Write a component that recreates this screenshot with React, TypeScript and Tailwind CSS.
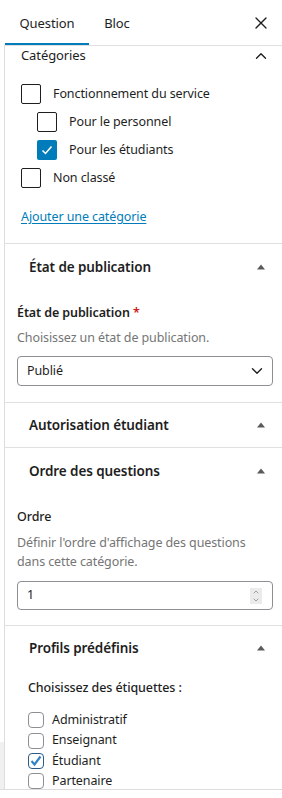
import { ChevronDown, ChevronUp, X } from 'lucide-react';

interface CategoryItem {
  label: string;
  checked: boolean;
  child?: boolean;
}

const categories: CategoryItem[] = [
  { label: 'Fonctionnement du service', checked: false },
  { label: 'Pour le personnel', checked: false, child: true },
  { label: 'Pour les étudiants', checked: true, child: true },
  { label: 'Non classé', checked: false },
];

const profiles = [
  { label: 'Administratif', checked: false },
  { label: 'Enseignant', checked: false },
  { label: 'Étudiant', checked: true },
  { label: 'Partenaire', checked: false },
];

function Triangle() {
  return (
    <svg width="10" height="6" viewBox="0 0 10 6" className="text-[#5a5a5a]">
      <path d="M5 0.5 L9 5.5 L1 5.5 Z" fill="currentColor" />
    </svg>
  );
}

function PanelTitle({ title, tall }: { title: string; tall?: boolean }) {
  return (
    <div className={`flex items-center justify-between pl-6 pr-[16px] font-semibold text-[13.5px] ${tall ? 'h-[46px]' : 'h-[44px]'}`}>
      <span>{title}</span>
      <Triangle />
    </div>
  );
}

function BigCheckbox({ checked }: { checked: boolean }) {
  return checked ? (
    <span className="w-5 h-5 rounded-[2px] bg-[#007cba] flex items-center justify-center shrink-0">
      <svg width="14" height="14" viewBox="0 0 14 14">
        <path d="M2.5 7.5 L5.5 10.5 L11.5 3.5" fill="none" stroke="white" strokeWidth="1.5" />
      </svg>
    </span>
  ) : (
    <span className="w-5 h-5 rounded-[2px] border border-[#1e1e1e] shrink-0" />
  );
}

function SmallCheckbox({ checked }: { checked: boolean }) {
  return checked ? (
    <span className="w-4 h-4 rounded-[4px] border border-[#2c5a86] flex items-center justify-center shrink-0">
      <svg width="14" height="14" viewBox="0 0 14 14">
        <path d="M2.5 7 L5.5 10.5 L11.5 2.5" fill="none" stroke="#3582c4" strokeWidth="2.2" />
      </svg>
    </span>
  ) : (
    <span className="w-4 h-4 rounded-[4px] border border-[#8c8f94] shrink-0" />
  );
}

export default function App() {
  return (
    <div className="w-[282px] h-[798px] bg-white flex flex-col overflow-hidden text-[12.5px] tracking-[-0.1px] text-[#1e1e1e] font-['Noto_Sans',sans-serif]">
      <div className="h-[789px] shrink-0 flex">
        <div className="w-[4px] flex flex-col">
          <div className="flex-1" />
          <div className="h-[47px] bg-[#f0f0f0]" />
        </div>

        <div className="flex-1 min-w-0 flex flex-col">
          {/* tabs */}
          <div className="h-[46px] shrink-0 flex items-stretch border-b border-[#e0e0e0] pl-px text-[13px]">
            <div className="w-[84px] pt-[3px] flex items-center justify-center shadow-[inset_0_-2px_0_#007cba]">Question</div>
            <div className="w-[56px] pt-[3px] flex items-center justify-center">Bloc</div>
            <div className="flex-1 flex items-center justify-end pr-[11px]">
              <X size={20} strokeWidth={1.6} />
            </div>
          </div>

          <div className="flex-1 min-h-0 overflow-hidden border-l border-[#dddddd] flex flex-col">
            {/* catégories */}
            <div className="pl-4 pb-4 shrink-0">
              <div className="h-5 flex items-center justify-between pr-[12px] text-[13px]">
                <span>Catégories</span>
                <ChevronUp size={18} strokeWidth={1.8} />
              </div>
              <div className="mt-[14px] flex flex-col">
                {categories.map((c) => (
                  <label key={c.label} className={`h-7 flex items-center gap-3 ${c.child ? 'ml-4' : ''}`}>
                    <BigCheckbox checked={c.checked} />
                    <span>{c.label}</span>
                  </label>
                ))}
              </div>
              <a className="mt-[15px] block h-5 leading-5 text-[#007cba] underline underline-offset-2">Ajouter une catégorie</a>
            </div>

            {/* état de publication */}
            <div className="border-t border-[#e0e0e0] shrink-0">
              <PanelTitle title="État de publication" tall />
              <div className="pl-3 pr-[9px] pt-[13px] pb-4">
                <div className="h-5 leading-5 font-semibold">
                  État de publication <span className="text-[#cc1818]">*</span>
                </div>
                <p className="mt-[5px] h-5 leading-5 text-[#757575]">Choisissez un état de publication.</p>
                <div className="mt-2 h-[30px] border border-[#8c8f94] rounded-[4px] flex items-center justify-between pl-[9px] pr-[6px]">
                  <span>Publié</span>
                  <ChevronDown size={18} strokeWidth={1.8} />
                </div>
              </div>
            </div>

            {/* autorisation */}
            <div className="border-t border-[#e0e0e0] shrink-0">
              <PanelTitle title="Autorisation étudiant" />
            </div>

            {/* ordre */}
            <div className="border-t border-[#e0e0e0] shrink-0">
              <PanelTitle title="Ordre des questions" tall />
              <div className="pl-3 pr-[9px] pt-[13px] pb-[15px]">
                <div className="h-5 leading-5 font-medium">Ordre</div>
                <p className="mt-[6px] leading-[19px] text-[#757575]">
                  Définir l'ordre d'affichage des questions
                  <br />
                  dans cette catégorie.
                </p>
                <div className="mt-[10px] h-[29px] border border-[#8c8f94] rounded-[4px] flex items-center justify-between pl-[9px] pr-[10px]">
                  <span>1</span>
                  <span className="w-[12px] h-[16px] bg-[#ebebeb] flex flex-col items-center justify-center text-[#8a8a8a]">
                    <ChevronUp size={8} strokeWidth={2.5} />
                    <ChevronDown size={8} strokeWidth={2.5} />
                  </span>
                </div>
              </div>
            </div>

            {/* profils */}
            <div className="border-t border-[#e0e0e0] shrink-0">
              <PanelTitle title="Profils prédéfinis" />
              <div className="pl-[23px] pt-2">
                <div className="h-5 leading-5 font-medium">Choisissez des étiquettes :</div>
                <div className="mt-3 flex flex-col">
                  {profiles.map((p) => (
                    <label key={p.label} className="h-[20.4px] flex items-center gap-2">
                      <SmallCheckbox checked={p.checked} />
                      <span>{p.label}</span>
                    </label>
                  ))}
                </div>
              </div>
            </div>
          </div>
        </div>
      </div>
      <div className="h-px bg-[#dddddd]" />
    </div>
  );
}
